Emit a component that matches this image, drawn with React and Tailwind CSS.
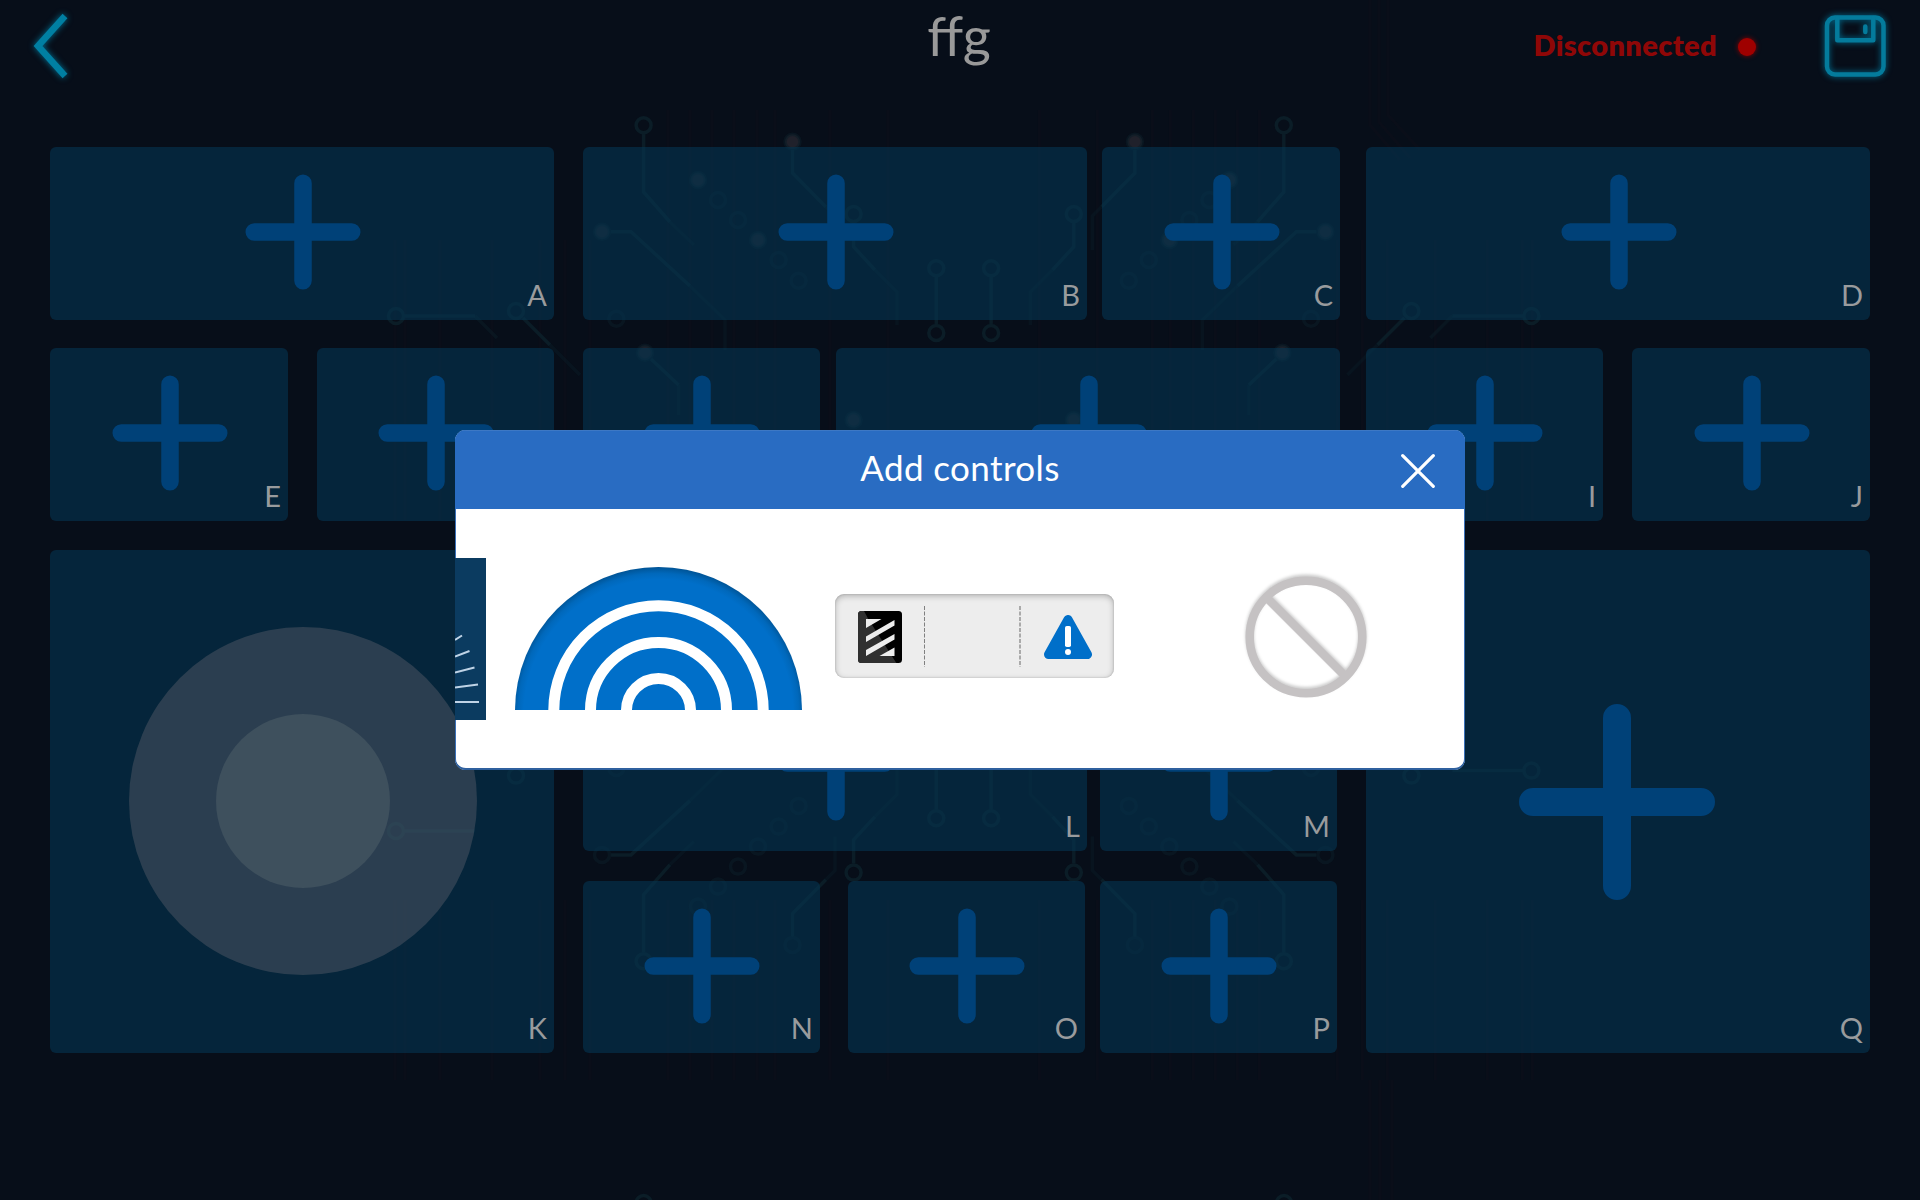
import React from 'react';

function Plus({ large }) {
  return large ? (
    <svg className="relative -left-px" width="196" height="196" viewBox="0 0 196 196" stroke="#004178" strokeWidth="28" strokeLinecap="round">
      <path d="M98 14V182M14 98H182" />
    </svg>
  ) : (
    <svg className="mb-[3px] ml-px" width="116" height="116" viewBox="0 0 116 116" stroke="#004178" strokeWidth="17.5" strokeLinecap="round">
      <path d="M58 9.25V106.75M9.25 58H106.75" />
    </svg>
  );
}

function Tile({ label, className, large, children }) {
  return (
    <div className={`relative flex shrink-0 items-center justify-center rounded-md bg-[#053552]/60 ${className}`}>
      {children || <Plus large={large} />}
      <span className="absolute right-[7px] bottom-[9px] text-[29px] leading-[32px] text-[#999b9d]">{label}</span>
    </div>
  );
}

const rings = [
  [643.6, 125.3], [718, 200], [738, 220], [778.6, 260], [798.6, 280.7],
  [853.6, 214], [936.3, 268.3], [936.3, 333], [616.4, 318.7], [516, 311],
];
const dots = [[792.5, 141.7], [698, 180], [758, 240], [602, 231.7], [645, 352.7], [853.6, 420]];
const solidTraces =
  'M643.6 134V192L670 222M792.5 150V173L826 207M611 231.7H631L690 286M853.6 223V246.7L875 270M936.3 277V324M651 359L678.6 385M523 318L550 345';
const fadingTraces =
  'M670 222L694 245M826 207L835 216V250M690 286L725 320V350M875 270L897 292V325M678.6 385V415M550 345L580 375';

function Quadrant({ bottom, sideY }) {
  return (
    <g>
      <path d={solidTraces} />
      <path d={fadingTraces} strokeOpacity="0.4" />
      {rings.map(([x, y]) => (
        <circle key={`${x}-${y}`} cx={x} cy={y} r="7.5" strokeOpacity={(x > 700 && x < 800) || x === 616.4 ? 0.6 : 1} />
      ))}
      {dots.map(([x, y]) => (
        <circle key={`${x}-${y}`} cx={x} cy={y} r="7.5" fill={bottom ? 'none' : '#23232d'} fillOpacity="0.9" strokeOpacity="0.6" />
      ))}
      <circle cx="396" cy={sideY} r="7.5" />
      <path d={`M404 ${sideY}H475`} />
      {!bottom && <path d={`M475 ${sideY}L497 ${sideY + 22}`} strokeOpacity="0.5" />}
    </g>
  );
}

function CircuitBackdrop() {
  const columns = [395, 405, 440, 492, 540, 565, 590, 668, 690, 712, 734, 757, 775, 830, 888];
  return (
    <svg className="absolute inset-0" width="1920" height="1200" viewBox="0 0 1920 1200" fill="none" stroke="#0b1d27" strokeWidth="3.5">
      <g stroke="#120f1b" strokeOpacity="0.35" strokeWidth="3">
        {columns.map((x) => (
          <path key={x} d={`M${x} ${x < 600 ? 240 : 110}V520M${1927.4 - x} ${x < 600 ? 240 : 110}V520M${x} 900V1080M${1927.4 - x} 900V1080`} />
        ))}
        <path d="M1370 0V125L1400 160M1379 0V122L1410 158M1388 0V115L1420 150M1370 1080V1200M1380 1080V1200M1392 1080V1200" />
      </g>
      <Quadrant sideY={316} />
      <g transform="translate(1927.4 0) scale(-1 1)"><Quadrant sideY={316} /></g>
      <g transform="translate(0 1086.6) scale(1 -1)"><Quadrant bottom sideY={255.6} /></g>
      <g transform="translate(1927.4 1086.6) scale(-1 -1)"><Quadrant bottom sideY={316} /></g>
      <circle cx="643.6" cy="1203" r="7.5" />
      <circle cx="1284" cy="1203" r="7.5" />
    </svg>
  );
}

function Header() {
  return (
    <header className="relative flex h-[147px] items-start">
      <svg className="mt-2 ml-6 [filter:drop-shadow(0_0_3px_#006f92)]" width="50" height="76" viewBox="24 8 50 76" fill="none" stroke="#007fa2" strokeWidth="6.5">
        <path d="M65 16L38 46L65 76" />
      </svg>
      <h1 className="absolute inset-x-0 top-0 pr-[2px] text-center text-[54px] leading-[72px] text-[#999999]">ffg</h1>
      <div className="mt-[27px] ml-auto flex h-[39px] items-center">
        <span className="mb-[3px] text-[29px] leading-[38px] font-extrabold tracking-[0.35px] text-[#8f0707]">Disconnected</span>
        <span className="ml-[21px] h-[18px] w-[18px] rounded-full bg-[#9f0000] shadow-[0_0_5px_#8a0000]" />
      </div>
      <svg className="mt-2 mr-[27px] ml-[61px] [filter:drop-shadow(0_0_3px_#006f92)]" width="76" height="76" viewBox="1817 8 76 76" fill="none" stroke="#047b9c" strokeWidth="4.5" strokeLinecap="round" strokeLinejoin="round">
        <rect x="1827" y="17.5" width="56.5" height="57" rx="8" />
        <path d="M1837.3 18V40.3H1873.3V18" strokeWidth="4.5" />
        <path d="M1865.3 26.5V32" strokeWidth="4.5" />
      </svg>
    </header>
  );
}

function Joystick() {
  return (
    <div className="mb-px ml-px flex h-[348px] w-[348px] items-center justify-center rounded-full bg-[#857c82]/30">
      <div className="h-[174px] w-[174px] rounded-full bg-[#3e505d]" />
    </div>
  );
}

function GaugePreview() {
  return (
    <svg className="shrink-0" width="31" height="162" viewBox="0 0 31 162">
      <rect width="31" height="162" fill="#0b3b60" />
      <path d="M0 82L7 77.5M0 98.5L14.5 93M0 114.5L19.5 109.5M0 129.5L23 126.5M0 144H24" stroke="#bfd3e6" strokeWidth="2" fill="none" />
    </svg>
  );
}

function ArcPreview() {
  return (
    <svg className="shrink-0" width="287" height="143" viewBox="0 0 287 143">
      <defs>
        <radialGradient id="arcShade" gradientUnits="userSpaceOnUse" cx="143.5" cy="147" r="148">
          <stop offset="0.91" stopColor="#006fc9" />
          <stop offset="0.95" stopColor="#0068bb" />
          <stop offset="1" stopColor="#00508f" />
        </radialGradient>
      </defs>
      <circle cx="143.5" cy="143.5" r="143.5" fill="url(#arcShade)" />
      <g fill="none" stroke="#fff" strokeWidth="11">
        <circle cx="143.5" cy="143.5" r="104.7" />
        <circle cx="143.5" cy="143.5" r="68" />
        <circle cx="143.5" cy="143.5" r="32" />
      </g>
    </svg>
  );
}

function LinePreview() {
  return (
    <div className="flex h-[84px] w-[279px] shrink-0 items-center rounded-[9px] bg-[#ededed] shadow-[inset_0_2px_6px_rgba(0,0,0,0.26),inset_0_0_2px_rgba(0,0,0,0.2)]">
      <svg className="mt-0.5 ml-[23px]" width="44" height="52" viewBox="0 0 44 52">
        <rect width="44" height="52" rx="3.5" fill="#000" />
        <path d="M3.5 0H6L10 7.5L38 51.5L38.5 52H3.5Q0 52 0 48.5V3.5Q0 0 3.5 0Z" fill="#303030" />
        <path d="M8 8H23.5L8 17ZM8 25.5L36.5 9V14.5L8 31ZM8 39L36.5 23V28.5L8 45ZM36.5 36.5V45H21.5Z" fill="#ededed" />
      </svg>
      <svg className="ml-[22px]" width="98" height="61" viewBox="0 0 98 61">
        <path d="M0.5 0V61" stroke="#808080" strokeDasharray="4 1.5" />
        <path d="M96 0V61" stroke="#aaaaaa" strokeWidth="2" strokeDasharray="4 1.5" />
      </svg>
      <svg className="ml-[22px] mt-0.5" width="48" height="44" viewBox="0 0 48 44">
        <path d="M24 4.5L43.5 39.5H4.5Z" fill="#006fc9" stroke="#006fc9" strokeWidth="9" strokeLinejoin="round" />
        <rect x="21" y="11" width="6" height="21" rx="1.8" fill="#fff" />
        <circle cx="24" cy="37" r="3" fill="#fff" />
      </svg>
    </div>
  );
}

function NonePreview() {
  return (
    <svg className="shrink-0 [filter:drop-shadow(0_-1.5px_1.5px_rgba(0,0,0,0.2))]" width="130" height="130" viewBox="0 0 130 130" fill="none" stroke="#c5c2c3">
      <circle cx="65" cy="66" r="56.3" strokeWidth="8.5" />
      <path d="M27 28L103 104" strokeWidth="8.5" />
    </svg>
  );
}

function AddControlsDialog() {
  return (
    <div role="dialog" className="absolute top-[430px] left-[455px] flex h-[340px] w-[1010px] flex-col overflow-hidden rounded-[11px] bg-white shadow-[inset_0_-2px_0_#2f609e,inset_0_0_0_1px_#3a70b8]">
      <div className="relative flex h-[79px] shrink-0 items-center justify-center bg-[#296cc2] shadow-[inset_0_1px_0_#3d78c4]">
        <h2 className="mb-[6px] text-[35px] leading-[44px] tracking-[0.4px] text-white">Add controls</h2>
        <svg className="absolute top-6 right-[30px]" width="34" height="34" viewBox="0 0 34 34" stroke="#fff" strokeWidth="3.2" strokeLinecap="round">
          <path d="M1.7 1.7L32.3 32.3M32.3 1.7L1.7 32.3" />
        </svg>
      </div>
      <div className="flex flex-1 items-center">
        <div className="mb-px flex"><GaugePreview /></div>
        <div className="mb-0.5 ml-[29px]"><ArcPreview /></div>
        <div className="ml-[33px] mb-[7px]"><LinePreview /></div>
        <div className="ml-[127px] mb-[7px]"><NonePreview /></div>
      </div>
    </div>
  );
}

export default function App() {
  return (
    <div className="relative h-[1200px] w-[1920px] overflow-hidden bg-[#070e19] font-['Lato','Noto_Sans',sans-serif]">
      <CircuitBackdrop />
      <Header />
      <main className="relative flex px-[50px]">
        <section className="flex w-[504px] flex-col">
          <Tile label="A" className="h-[173px]" />
          <div className="mt-7 flex justify-between">
            <Tile label="E" className="h-[173px] w-[238px]" />
            <Tile label="F" className="h-[173px] w-[237px]" />
          </div>
          <Tile label="K" className="mt-[29px] h-[503px]"><Joystick /></Tile>
        </section>
        <section className="ml-[29px] flex w-[757px] flex-col">
          <div className="flex justify-between">
            <Tile label="B" className="h-[173px] w-[504px]" />
            <Tile label="C" className="h-[173px] w-[238px]" />
          </div>
          <div className="mt-7 flex justify-between">
            <Tile label="G" className="h-[173px] w-[237px]" />
            <Tile label="H" className="h-[173px] w-[504px]" />
          </div>
          <div className="mt-[157px] flex gap-[13px]">
            <Tile label="L" className="h-[173px] w-[504px]" />
            <Tile label="M" className="h-[173px] w-[237px]" />
          </div>
          <div className="mt-[30px] flex">
            <Tile label="N" className="h-[172px] w-[237px]" />
            <Tile label="O" className="ml-7 h-[172px] w-[237px]" />
            <Tile label="P" className="ml-[15px] h-[172px] w-[237px]" />
          </div>
        </section>
        <section className="ml-[26px] flex w-[504px] flex-col">
          <Tile label="D" className="h-[173px]" />
          <div className="mt-7 flex justify-between">
            <Tile label="I" className="h-[173px] w-[237px]" />
            <Tile label="J" className="h-[173px] w-[238px]" />
          </div>
          <Tile label="Q" className="mt-[29px] h-[503px]" large />
        </section>
      </main>
      <AddControlsDialog />
    </div>
  );
}
